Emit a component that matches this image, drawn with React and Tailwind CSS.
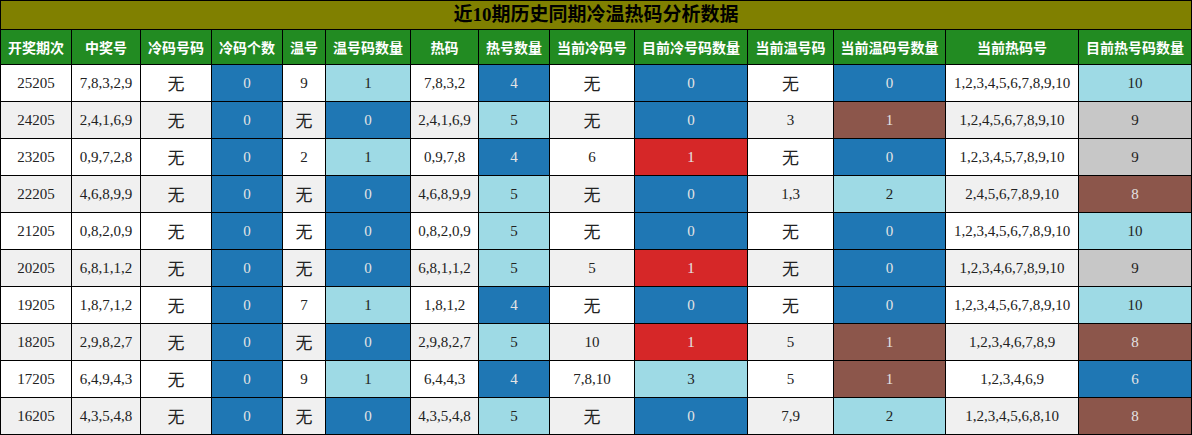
import React from "react";

const headers = ["开奖期次","中奖号","冷码号码","冷码个数","温号","温号码数量","热码","热号数量","当前冷码号","目前冷号码数量","当前温号码","当前温码号数量","当前热码号","目前热号码数量"];

// B=blue, L=light cyan, R=brown(rust), D=red, G=gray
const rows = [
  ["25205","7,8,3,2,9","无",["0","B"],"9",["1","L"],"7,8,3,2",["4","B"],"无",["0","B"],"无",["0","B"],"1,2,3,4,5,6,7,8,9,10",["10","L"]],
  ["24205","2,4,1,6,9","无",["0","B"],"无",["0","B"],"2,4,1,6,9",["5","L"],"无",["0","B"],"3",["1","R"],"1,2,4,5,6,7,8,9,10",["9","G"]],
  ["23205","0,9,7,2,8","无",["0","B"],"2",["1","L"],"0,9,7,8",["4","B"],"6",["1","D"],"无",["0","B"],"1,2,3,4,5,7,8,9,10",["9","G"]],
  ["22205","4,6,8,9,9","无",["0","B"],"无",["0","B"],"4,6,8,9,9",["5","L"],"无",["0","B"],"1,3",["2","L"],"2,4,5,6,7,8,9,10",["8","R"]],
  ["21205","0,8,2,0,9","无",["0","B"],"无",["0","B"],"0,8,2,0,9",["5","L"],"无",["0","B"],"无",["0","B"],"1,2,3,4,5,6,7,8,9,10",["10","L"]],
  ["20205","6,8,1,1,2","无",["0","B"],"无",["0","B"],"6,8,1,1,2",["5","L"],"5",["1","D"],"无",["0","B"],"1,2,3,4,6,7,8,9,10",["9","G"]],
  ["19205","1,8,7,1,2","无",["0","B"],"7",["1","L"],"1,8,1,2",["4","B"],"无",["0","B"],"无",["0","B"],"1,2,3,4,5,6,7,8,9,10",["10","L"]],
  ["18205","2,9,8,2,7","无",["0","B"],"无",["0","B"],"2,9,8,2,7",["5","L"],"10",["1","D"],"5",["1","R"],"1,2,3,4,6,7,8,9",["8","R"]],
  ["17205","6,4,9,4,3","无",["0","B"],"9",["1","L"],"6,4,4,3",["4","B"],"7,8,10",["3","L"],"5",["1","R"],"1,2,3,4,6,9",["6","B"]],
  ["16205","4,3,5,4,8","无",["0","B"],"无",["0","B"],"4,3,5,4,8",["5","L"],"无",["0","B"],"7,9",["2","L"],"1,2,3,4,5,6,8,10",["8","R"]],
];

const colorCls = {
  B: "bg-[#1f77b4] text-[#e4e4e4]",
  L: "bg-[#9edae5] text-[#222222]",
  R: "bg-[#8c564b] text-[#e4e4e4]",
  D: "bg-[#d62728] text-[#e4e4e4]",
  G: "bg-[#c7c7c7] text-[#222222]",
};

const FONT = "font-['Liberation_Serif','Noto_Sans_CJK_SC',serif]";

export default function App() {
  return (
    <div className="w-[1192px] h-[435px] bg-white">
      <div className="grid grid-cols-[70px_68px_70px_70px_42px_84px_67px_70px_84px_112px_85px_111px_132px_112px] grid-rows-[28px_34px_repeat(10,36px)] gap-px bg-black p-px">
        <div className={`col-span-14 bg-[#808000] flex items-center justify-center text-[19px] font-bold text-black ${FONT}`}>
          近10期历史同期冷温热码分析数据
        </div>
        {headers.map((h) => (
          <div key={h} className="bg-[#228b22] flex items-center justify-center text-white font-bold text-[14px] font-['Noto_Sans_CJK_SC',sans-serif] whitespace-nowrap">
            {h}
          </div>
        ))}
        {rows.map((r, ri) => {
          const base = ri % 2 === 1 ? "bg-[#f0f0f0]" : "bg-white";
          return r.map((c, ci) => {
            if (Array.isArray(c)) {
              return (
                <div key={ri + "-" + ci} className={`flex items-center justify-center text-[15px] ${FONT} ${colorCls[c[1]]}`}>
                  {c[0]}
                </div>
              );
            }
            const isWu = c === "无";
            return (
              <div key={ri + "-" + ci} className={`flex items-center justify-center text-[#222222] whitespace-nowrap ${FONT} ${base} ${isWu ? "text-[17px] pt-[3px]" : "text-[15px]"}`}>
                {c}
              </div>
            );
          });
        })}
      </div>
    </div>
  );
}
